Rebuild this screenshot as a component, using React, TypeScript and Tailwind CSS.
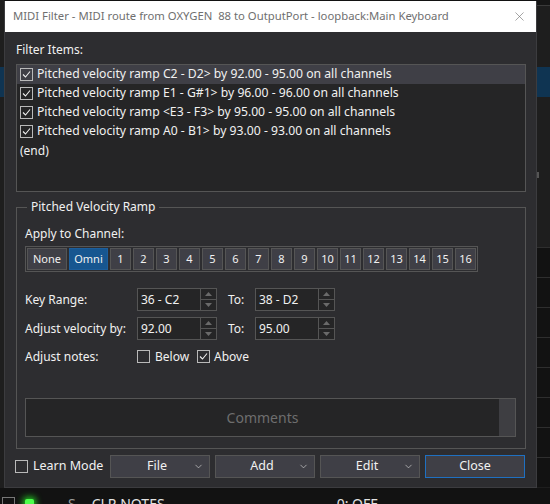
import { ChevronDown, X } from 'lucide-react';

const CHANNELS = Array.from({ length: 16 }, (_, i) => String(i + 1));

const FILTER_ITEMS = [
  'Pitched velocity ramp C2 - D2> by 92.00 - 95.00 on all channels',
  'Pitched velocity ramp E1 - G#1> by 96.00 - 96.00 on all channels',
  'Pitched velocity ramp <E3 - F3> by 95.00 - 95.00 on all channels',
  'Pitched velocity ramp A0 - B1> by 93.00 - 93.00 on all channels',
];

function CheckBox({ checked }: { checked?: boolean }) {
  return (
    <div className="w-[13px] h-[13px] shrink-0 border border-[#b9b9b9] flex items-center justify-center">
      {checked && (
        <svg width="11" height="11" viewBox="0 0 11 11" fill="none">
          <path d="M2 5.5 L4.5 8 L9 2.5" stroke="#f0f0f0" strokeWidth="1.1" />
        </svg>
      )}
    </div>
  );
}

function SpinBox({ value }: { value: string }) {
  return (
    <div className="w-[80px] h-[23px] border border-[#555] bg-[#252526] flex">
      <div className="flex-1 pl-[3px] text-[12px] leading-[21px] text-[#f1f1f1]">{value}</div>
      <div className="w-[16px] flex flex-col border-l border-[#555]">
        <div className="flex-1 flex items-center justify-center border-b border-[#555]">
          <svg width="7" height="4" viewBox="0 0 7 4">
            <path d="M0 4 L3.5 0 L7 4 Z" fill="#6a6a6a" />
          </svg>
        </div>
        <div className="flex-1 flex items-center justify-center">
          <svg width="7" height="4" viewBox="0 0 7 4">
            <path d="M0 0 L3.5 4 L7 0 Z" fill="#6a6a6a" />
          </svg>
        </div>
      </div>
    </div>
  );
}

function DropButton({ label }: { label: string }) {
  return (
    <div className="w-[100px] h-[23px] shrink-0 border border-[#555] bg-[#3f3f46] flex items-center text-[12.5px] text-[#f1f1f1]">
      <span className="flex-1 text-center pl-[10px]">{label}</span>
      <ChevronDown size={11} strokeWidth={1.5} className="mr-[5px] text-[#d0d0d0]" />
    </div>
  );
}

export default function App() {
  return (
    <div className="w-[550px] h-[504px] overflow-hidden bg-[#121212] flex flex-col font-['Noto_Sans',sans-serif]">
      <div className="flex h-[488px] shrink-0">
        {/* ===== APP BEHIND (LEFT) ===== */}
        <div className="w-[4px] flex flex-col bg-[#1e1e1e]">
          <div className="h-[67px]" />
          <div className="h-[30px] bg-[#0f3452]" />
        </div>

        {/* ===== DIALOG ===== */}
        <div className="w-[533px] mt-[1px] h-[487px] flex flex-col bg-[#2d2d30] border-x border-b border-[#3c3c3f]">
          <div className="h-[31px] shrink-0 bg-white flex items-center pl-[8px] pr-[9px]">
            <span className="flex-1 whitespace-pre text-[11.3px] text-[#6f6f6f]">
              MIDI Filter - MIDI route from OXYGEN  88 to OutputPort - loopback:Main Keyboard
            </span>
            <X size={15} strokeWidth={1} className="text-[#707070]" />
          </div>

          <div className="flex flex-col pl-[11px] text-[#f1f1f1] text-[12px]">
            <div className="pt-[9px] h-[26px] leading-[17px]">Filter Items:</div>

            {/* list */}
            <div className="mt-[6px] w-[510px] h-[128px] border border-[#555] bg-[#252526] flex flex-col">
              {FILTER_ITEMS.map((item, idx) => (
                <div
                  key={item}
                  className={`h-[19px] shrink-0 flex items-center gap-[4px] pl-[3px] ${
                    idx === 0 ? 'bg-[#3f3f46]' : ''
                  }`}
                >
                  <CheckBox checked />
                  <span className="text-[12.2px]">{item}</span>
                </div>
              ))}
              <div className="h-[19px] flex items-center pl-[3px]">(end)</div>
            </div>

            {/* group */}
            <div className="relative mt-[15px] w-[510px] h-[242px] shrink-0 border border-[#555] pl-[8px] pr-[9px] flex flex-col">
              <div className="absolute -top-[10px] left-[10px] px-[4px] bg-[#2d2d30] leading-[17px]">
                Pitched Velocity Ramp
              </div>
              <div className="mt-[17px] h-[17px] leading-[17px]">Apply to Channel:</div>

              <div className="mt-[4px] w-[453px] h-[26px] border border-[#555] p-[1px] flex gap-[2px] text-[11px] text-[#f1f1f1]">
                <div className="w-[40px] bg-[#3f3f46] border border-[#555] flex items-center justify-center">None</div>
                <div className="w-[39px] bg-[#175690] border border-[#1c5e9c] flex items-center justify-center">Omni</div>
                {CHANNELS.map((ch) => (
                  <div key={ch} className="w-[21px] bg-[#3f3f46] border border-[#555] flex items-center justify-center">
                    {ch}
                  </div>
                ))}
              </div>

              <div className="mt-[16px] flex items-center">
                <span className="w-[112px]">Key Range:</span>
                <SpinBox value="36 - C2" />
                <span className="ml-[11px] w-[27px]">To:</span>
                <SpinBox value="38 - D2" />
              </div>
              <div className="mt-[6px] flex items-center">
                <span className="w-[112px]">Adjust velocity by:</span>
                <SpinBox value="92.00" />
                <span className="ml-[11px] w-[27px]">To:</span>
                <SpinBox value="95.00" />
              </div>
              <div className="mt-[8px] h-[17px] flex items-center">
                <span className="w-[112px]">Adjust notes:</span>
                <CheckBox />
                <span className="ml-[5px] w-[42px]">Below</span>
                <CheckBox checked />
                <span className="ml-[4px]">Above</span>
              </div>

              <div className="mt-[33px] h-[39px] border border-[#555] bg-[#252526] flex">
                <div className="flex-1 flex items-center justify-center text-[14px] text-[#6e6e6e]">Comments</div>
                <div className="w-[16px] bg-[#3e3e42]" />
              </div>
            </div>

            {/* footer */}
            <div className="mt-[6px] flex items-center gap-[5px]">
              <div className="w-[90px] shrink-0 whitespace-nowrap flex items-center gap-[5px] -ml-[1px] text-[12.5px]">
                <CheckBox />
                <span>Learn Mode</span>
              </div>
              <DropButton label="File" />
              <DropButton label="Add" />
              <DropButton label="Edit" />
              <div className="w-[100px] h-[23px] shrink-0 border border-[#1f70c1] bg-[#3f3f46] flex items-center justify-center text-[12.5px]">
                Close
              </div>
            </div>
          </div>
        </div>

        {/* ===== APP BEHIND (RIGHT) ===== */}
        <div className="flex-1 flex flex-col bg-[#1e1e1e]">
          <div className="h-[6px] border-b border-[#3a3a3a] bg-[#161616]" />
          <div className="h-[61px]" />
          <div className="h-[30px] bg-[#0f3452]" />
          <div className="h-[150px] pt-[75px]">
            <div className="w-[2px] h-[6px] bg-[#555]" />
          </div>
          {Array.from({ length: 8 }, (_, i) => (
            <div key={i} className="h-[30px] border-t border-[#2e2e2e] bg-[#121212]" />
          ))}
        </div>
      </div>

      {/* ===== STATUS BAR BEHIND ===== */}
      <div className="flex items-start pt-[7px] text-[14px] leading-[18px] text-[#e2e2e2]">
        <div className="ml-[2px] mt-[2px] w-[13px] h-[10px] border border-[#777] border-b-0" />
        <div className="ml-[10px] mt-[4px] w-[9px] h-[9px] rounded-[2px] bg-[#4cff4c] shadow-[0_0_6px_2px_#22c522]" />
        <span className="ml-[34px] text-[#9a9a9a]">S</span>
        <span className="ml-[16px]">CLR NOTES</span>
        <span className="ml-[172px]">0: OFF</span>
      </div>
    </div>
  );
}
